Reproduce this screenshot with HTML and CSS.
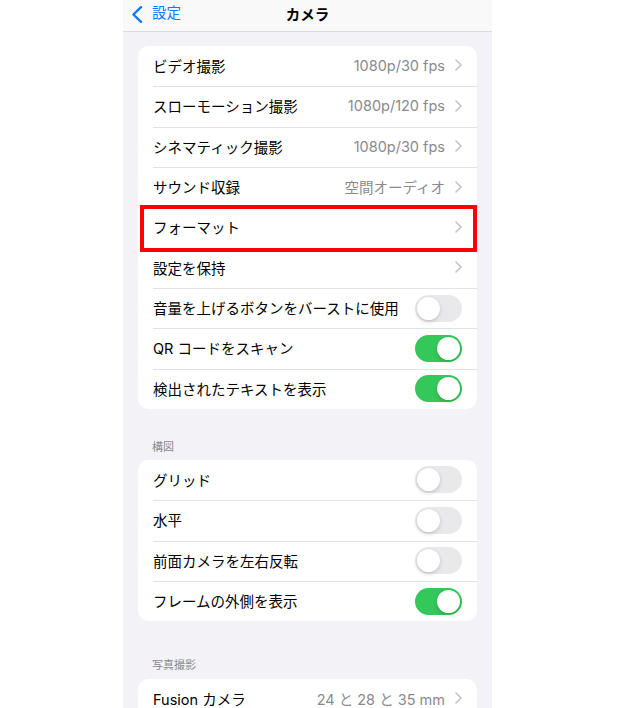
FILE: index.html
```html
<!DOCTYPE html>
<html lang="ja">
<head>
<meta charset="utf-8">
<link rel="stylesheet" href="styles.css">
</head>
<body>
<div class="phone">
  <div class="nav">
    <div class="back">
      <svg class="back-icon" width="12" height="17" viewBox="0 0 12 17"><path d="M10 1.2 L2.4 8.5 L10 15.8" fill="none" stroke="#0a7aff" stroke-width="2.4" stroke-linecap="round" stroke-linejoin="round"/></svg>
      <span class="back-label">設定</span>
    </div>
    <div class="title">カメラ</div>
  </div>

  <div class="card first-card">
    <div class="row"><div class="row-inner"><span class="label">ビデオ撮影</span><span class="value">1080p/30 fps</span><svg class="chev" width="7" height="12" viewBox="0 0 7 12"><path d="M1 1 L6 6 L1 11" fill="none" stroke="#c4c4c7" stroke-width="1.6" stroke-linecap="round" stroke-linejoin="round"/></svg></div></div>
    <div class="row"><div class="row-inner"><span class="label">スローモーション撮影</span><span class="value">1080p/120 fps</span><svg class="chev" width="7" height="12" viewBox="0 0 7 12"><path d="M1 1 L6 6 L1 11" fill="none" stroke="#c4c4c7" stroke-width="1.6" stroke-linecap="round" stroke-linejoin="round"/></svg></div></div>
    <div class="row"><div class="row-inner"><span class="label">シネマティック撮影</span><span class="value">1080p/30 fps</span><svg class="chev" width="7" height="12" viewBox="0 0 7 12"><path d="M1 1 L6 6 L1 11" fill="none" stroke="#c4c4c7" stroke-width="1.6" stroke-linecap="round" stroke-linejoin="round"/></svg></div></div>
    <div class="row"><div class="row-inner"><span class="label">サウンド収録</span><span class="value">空間オーディオ</span><svg class="chev" width="7" height="12" viewBox="0 0 7 12"><path d="M1 1 L6 6 L1 11" fill="none" stroke="#c4c4c7" stroke-width="1.6" stroke-linecap="round" stroke-linejoin="round"/></svg></div></div>
    <div class="row highlight"><div class="row-inner"><span class="label">フォーマット</span><span class="value"></span><svg class="chev" width="7" height="12" viewBox="0 0 7 12"><path d="M1 1 L6 6 L1 11" fill="none" stroke="#c4c4c7" stroke-width="1.6" stroke-linecap="round" stroke-linejoin="round"/></svg></div><div class="red-box"></div></div>
    <div class="row"><div class="row-inner"><span class="label">設定を保持</span><span class="value"></span><svg class="chev" width="7" height="12" viewBox="0 0 7 12"><path d="M1 1 L6 6 L1 11" fill="none" stroke="#c4c4c7" stroke-width="1.6" stroke-linecap="round" stroke-linejoin="round"/></svg></div></div>
    <div class="row"><div class="row-inner"><span class="label">音量を上げるボタンをバーストに使用</span><span class="toggle"><span class="knob"></span></span></div></div>
    <div class="row"><div class="row-inner"><span class="label">QR コードをスキャン</span><span class="toggle on"><span class="knob"></span></span></div></div>
    <div class="row"><div class="row-inner"><span class="label">検出されたテキストを表示</span><span class="toggle on"><span class="knob"></span></span></div></div>
  </div>

  <div class="section-header h1">構図</div>
  <div class="card">
    <div class="row"><div class="row-inner"><span class="label">グリッド</span><span class="toggle"><span class="knob"></span></span></div></div>
    <div class="row"><div class="row-inner"><span class="label">水平</span><span class="toggle"><span class="knob"></span></span></div></div>
    <div class="row"><div class="row-inner"><span class="label">前面カメラを左右反転</span><span class="toggle"><span class="knob"></span></span></div></div>
    <div class="row"><div class="row-inner"><span class="label">フレームの外側を表示</span><span class="toggle on"><span class="knob"></span></span></div></div>
  </div>

  <div class="section-header h2">写真撮影</div>
  <div class="card">
    <div class="row"><div class="row-inner"><span class="label">Fusion カメラ</span><span class="value">24 と 28 と 35 mm</span><svg class="chev" width="7" height="12" viewBox="0 0 7 12"><path d="M1 1 L6 6 L1 11" fill="none" stroke="#c4c4c7" stroke-width="1.6" stroke-linecap="round" stroke-linejoin="round"/></svg></div></div>
  </div>
</div>
</body>
</html>
```

FILE: styles.css
```css
html, body {
  margin: 0;
  padding: 0;
  background: #ffffff;
}
body {
  width: 620px;
  height: 708px;
  overflow: hidden;
  font-family: "Inter", "Noto Sans CJK JP", sans-serif;
  color: #000;
}
.phone {
  margin-left: 123px;
  width: 369px;
  height: 708px;
  background: #f2f2f7;
  overflow: hidden;
}
.nav {
  height: 32px;
  box-sizing: border-box;
  padding-bottom: 5px;
  background: #f9f9f9;
  border-bottom: 1px solid #dcdcde;
  display: flex;
  align-items: center;
  position: relative;
}
.back {
  display: flex;
  align-items: center;
  padding-left: 8px;
  gap: 9px;
  color: #0a7aff;
  font-size: 14.5px;
}
.back-icon {
  display: block;
  margin-top: 2px;
}
.back-label {
  line-height: 1;
}
.title {
  position: absolute;
  left: 0;
  right: 0;
  top: 0;
  bottom: 5px;
  display: flex;
  align-items: center;
  justify-content: center;
  font-weight: 700;
  font-size: 14.5px;
  pointer-events: none;
}
.card {
  margin: 0 15px 0 14.5px;
  background: #fff;
  border-radius: 10px;
}
.first-card {
  margin-top: 14px;
}
.row {
  height: 40.33px;
  padding-left: 15.5px;
  display: flex;
  position: relative;
}
.row-inner {
  flex: 1;
  display: flex;
  align-items: center;
  border-top: 1px solid #e2e2e5;
  padding-right: 15px;
  padding-bottom: 2px;
  box-sizing: border-box;
}
.row:first-child .row-inner {
  border-top: none;
}
.label {
  font-size: 14.5px;
  flex: 1;
  white-space: nowrap;
}
.value {
  font-size: 14.5px;
  color: #8a8a8e;
  margin-right: 10px;
  white-space: nowrap;
}
.chev {
  display: block;
}
.toggle {
  width: 47px;
  height: 27px;
  border-radius: 14px;
  background: #e9e9eb;
  position: relative;
  flex: none;
  margin-top: 1px;
}
.toggle.on {
  background: #34c759;
}
.knob {
  position: absolute;
  top: 2px;
  left: 2px;
  width: 23px;
  height: 23px;
  border-radius: 50%;
  background: #fff;
  box-shadow: 0 2px 4px rgba(0,0,0,0.15), 0 0 1px rgba(0,0,0,0.1);
}
.toggle.on .knob {
  left: 22px;
}
.red-box {
  position: absolute;
  z-index: 2;
  top: -2px;
  bottom: -4px;
  left: 2.5px;
  right: 0;
  border: 4px solid #ff0000;
}
.section-header {
  font-size: 11px;
  color: #8a8a8e;
  padding-left: 29px;
  line-height: 14px;
}
.h1 {
  margin-top: 31px;
  margin-bottom: 6px;
}
.h2 {
  margin-top: 37px;
  margin-bottom: 7px;
}
```
